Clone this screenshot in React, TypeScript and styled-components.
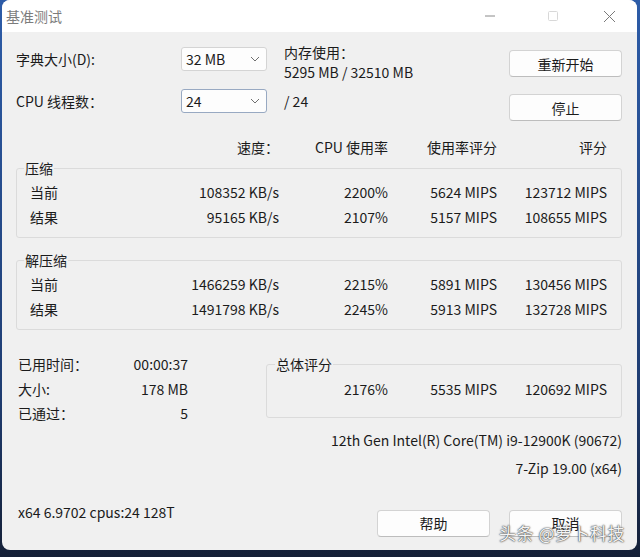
import React from 'react';
import styled, { createGlobalStyle } from 'styled-components';

const GlobalStyle = createGlobalStyle`
  html, body {
    margin: 0;
    padding: 0;
    background: #1c2f55;
  }
  body {
    font-family: 'Noto Sans CJK SC', 'Noto Sans', sans-serif;
    color: #1b1b1b;
  }
`;

const Desktop = styled.div`
  width: 640px;
  height: 557px;
  padding: 0 3px 7px 2px;
  box-sizing: border-box;
  background: linear-gradient(180deg, #2d5ca8 0%, #1f3d72 70%, #141f36 100%);
`;

const Window = styled.div`
  position: relative;
  height: 100%;
  display: flex;
  flex-direction: column;
  background: #f0f0f0;
  border-radius: 8px;
  overflow: hidden;
`;

const TitleBar = styled.div`
  height: 32px;
  flex: none;
  display: flex;
  align-items: center;
  background: #ffffff;
  padding-left: 4px;
`;

const Title = styled.span`
  flex: 1;
  font-size: 14px;
  color: #7c7c7c;
`;

const Controls = styled.div`
  display: flex;
  align-items: center;
  height: 100%;
`;

const ControlBtn = styled.div<{ w: number }>`
  width: ${p => p.w}px;
  height: 100%;
  display: flex;
  align-items: center;
  justify-content: center;
`;

const Body = styled.div`
  flex: 1;
  display: flex;
  flex-direction: column;
  padding: 0 15px 0 14px;
`;

const TopGrid = styled.div`
  display: grid;
  grid-template-columns: 165px 86px 1fr 113px;
  grid-template-rows: 44px 40px;
  align-items: center;
  margin-top: 5px;
  font-size: 14px;
`;

const FieldLabel = styled.div`
  font-size: 14px;
`;

const SelectBox = styled.div<{ focused?: boolean }>`
  height: 24px;
  box-sizing: border-box;
  display: flex;
  align-items: center;
  justify-content: space-between;
  padding: 0 6px 0 4px;
  background: #fdfdfd;
  border: 1px solid ${p => (p.focused ? '#98a9c2' : '#d4d4d4')};
  border-radius: 3px;
  font-size: 14px;
`;

const Memory = styled.div`
  padding: 6px 0 0 17px;
  line-height: 20px;
`;

const Plain = styled.div`
  padding-left: 17px;
`;

const Button = styled.div`
  height: 27px;
  box-sizing: border-box;
  display: flex;
  align-items: center;
  justify-content: center;
  background: #fdfdfd;
  border: 1px solid #d3d3d3;
  border-bottom-color: #bdbdbd;
  border-radius: 4px;
  font-size: 14px;
`;

const SideButton = styled(Button)`
  align-self: start;
  margin-top: 13px;
`;

const ResultGrid = styled.div`
  display: grid;
  grid-template-columns: 100px 1fr 109px 109px 110px;
  align-items: center;
  font-size: 14px;
  white-space: nowrap;
`;

const HeaderRow = styled(ResultGrid)`
  height: 24px;
  margin-top: 14px;
  padding: 0 15px 0 17px;
`;

const DataRow = styled(ResultGrid)`
  height: 25px;
`;

const Cell = styled.div`
  text-align: right;
`;

const Group = styled.fieldset`
  margin: 0;
  padding: 2px 14px 8px 13px;
  border: 1px solid #dbdbdb;
  border-radius: 3px;
  min-width: 0;
`;

const GroupTitle = styled.legend<{ offset: number }>`
  padding: 0 1px;
  margin-left: ${p => p.offset}px;
  font-size: 14px;
  line-height: 18px;
`;

const GroupWrap = styled.div<{ gap: number }>`
  margin-top: ${p => p.gap}px;
`;

const BottomRow = styled.div`
  display: grid;
  grid-template-columns: 172px 1fr;
  column-gap: 78px;
  margin-top: 25px;
  font-size: 14px;
`;

const Stats = styled.div`
  display: grid;
  grid-template-columns: 1fr auto;
  grid-auto-rows: 24.5px;
  align-items: center;
  padding-left: 2px;
  margin-top: -3px;
`;

const StatValue = styled.span`
  justify-self: end;
`;

const TotalGroup = styled(Group)`
  align-self: start;
  padding: 6px 14px 18px 0;
`;

const TotalRow = styled.div`
  display: grid;
  grid-template-columns: 1fr 109px 109px 110px;
  line-height: 20px;
  font-size: 14px;
`;

const InfoBlock = styled.div`
  display: flex;
  flex-direction: column;
`;

const InfoLine = styled.div`
  height: 28px;
  display: flex;
  align-items: center;
  justify-content: flex-end;
  font-size: 14px;
  white-space: nowrap;
`;

const Footer = styled.div`
  display: grid;
  grid-template-columns: 1fr 113px 113px;
  column-gap: 19px;
  align-items: start;
  margin-top: 20px;
  padding-left: 2px;
  font-size: 14px;
`;

const BuildInfo = styled.span`
  line-height: 20px;
`;

const FooterButton = styled(Button)`
  margin-top: 8px;
`;

const Watermark = styled.div`
  position: absolute;
  right: 12px;
  bottom: 5px;
  font-size: 17px;
  color: #f4f4f4;
  text-shadow: 0 0 2px #333, 0 0 1px #333;
  letter-spacing: 0.5px;
`;

const Chevron = () => (
  <svg width="10" height="6" viewBox="0 0 10 6">
    <path d="M1 1l4 4 4-4" fill="none" stroke="#707070" strokeWidth="1" />
  </svg>
);

type Row = [string, string, string, string, string];

const compress: Row[] = [
  ['当前', '108352 KB/s', '2200%', '5624 MIPS', '123712 MIPS'],
  ['结果', '95165 KB/s', '2107%', '5157 MIPS', '108655 MIPS'],
];

const decompress: Row[] = [
  ['当前', '1466259 KB/s', '2215%', '5891 MIPS', '130456 MIPS'],
  ['结果', '1491798 KB/s', '2245%', '5913 MIPS', '132728 MIPS'],
];

const ResultGroup = ({ title, rows, gap }: { title: string; rows: Row[]; gap: number }) => (
  <GroupWrap gap={gap}>
    <Group>
      <GroupTitle offset={-6}>{title}</GroupTitle>
      {rows.map((r, idx) => (
        <DataRow key={idx}>
          <div>{r[0]}</div>
          <Cell>{r[1]}</Cell>
          <Cell>{r[2]}</Cell>
          <Cell>{r[3]}</Cell>
          <Cell>{r[4]}</Cell>
        </DataRow>
      ))}
    </Group>
  </GroupWrap>
);

const App: React.FC = () => (
  <>
    <GlobalStyle />
    <Desktop>
      <Window>
        <TitleBar>
          <Title>基准测试</Title>
          <Controls>
            <ControlBtn w={70}>
              <svg width="12" height="12" viewBox="0 0 12 12">
                <path d="M1 6h10" stroke="#8a8a8a" strokeWidth="1" />
              </svg>
            </ControlBtn>
            <ControlBtn w={56}>
              <svg width="12" height="12" viewBox="0 0 12 12">
                <rect x="1.5" y="1.5" width="9" height="9" rx="1" fill="none" stroke="#d8d8d8" />
              </svg>
            </ControlBtn>
            <ControlBtn w={56}>
              <svg width="13" height="13" viewBox="0 0 13 13">
                <path d="M1 1l11 11M12 1L1 12" stroke="#7a7a7a" strokeWidth="1" />
              </svg>
            </ControlBtn>
          </Controls>
        </TitleBar>
        <Body>
          <TopGrid>
            <FieldLabel>字典大小(D):</FieldLabel>
            <SelectBox>
              <span>32 MB</span>
              <Chevron />
            </SelectBox>
            <Memory>
              内存使用：
              <br />
              5295 MB / 32510 MB
            </Memory>
            <SideButton>重新开始</SideButton>
            <FieldLabel>CPU 线程数：</FieldLabel>
            <SelectBox focused>
              <span>24</span>
              <Chevron />
            </SelectBox>
            <Plain>/ 24</Plain>
            <SideButton>停止</SideButton>
          </TopGrid>

          <HeaderRow>
            <div />
            <Cell>速度：</Cell>
            <Cell>CPU 使用率</Cell>
            <Cell>使用率评分</Cell>
            <Cell>评分</Cell>
          </HeaderRow>

          <ResultGroup title="压缩" rows={compress} gap={0} />
          <ResultGroup title="解压缩" rows={decompress} gap={13} />

          <BottomRow>
            <Stats>
              <span>已用时间：</span>
              <StatValue>00:00:37</StatValue>
              <span>大小:</span>
              <StatValue>178 MB</StatValue>
              <span>已通过：</span>
              <StatValue>5</StatValue>
            </Stats>
            <TotalGroup>
              <GroupTitle offset={8}>总体评分</GroupTitle>
              <TotalRow>
                <div />
                <Cell>2176%</Cell>
                <Cell>5535 MIPS</Cell>
                <Cell>120692 MIPS</Cell>
              </TotalRow>
            </TotalGroup>
          </BottomRow>

          <InfoBlock>
            <InfoLine>12th Gen Intel(R) Core(TM) i9-12900K (90672)</InfoLine>
            <InfoLine>7-Zip 19.00 (x64)</InfoLine>
          </InfoBlock>

          <Footer>
            <BuildInfo>x64 6.9702 cpus:24 128T</BuildInfo>
            <FooterButton>帮助</FooterButton>
            <FooterButton>取消</FooterButton>
          </Footer>
        </Body>
        <Watermark>头条 @萝卜科技</Watermark>
      </Window>
    </Desktop>
  </>
);

export default App;
